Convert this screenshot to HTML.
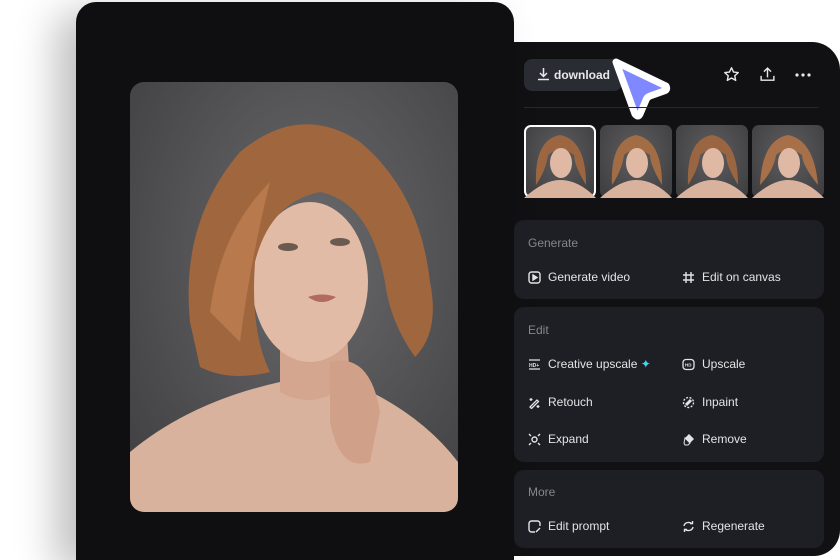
<!DOCTYPE html>
<html><head><meta charset="utf-8"><style>
*{margin:0;padding:0;box-sizing:border-box}
html,body{width:840px;height:560px;overflow:hidden}
body{background:#fff;position:relative;font-family:"Liberation Sans",sans-serif}
.left{position:absolute;left:76px;top:2px;width:438px;height:558px;background:#0f0f11;border-radius:20px 20px 0 0;box-shadow:-20px 10px 40px rgba(0,0,0,.25)}
.photo{position:absolute;left:130px;top:82px;width:328px;height:430px;border-radius:14px;overflow:hidden;background:radial-gradient(ellipse at 55% 40%,#6a6a6c,#4a4a4c 70%,#3e3e40)}
.right{position:absolute;left:514px;top:42px;width:326px;height:514px;background:#111114;border-radius:0 28px 26px 0}
.btn{position:absolute;left:524px;top:59px;width:98px;height:32px;background:#2a2c33;border-radius:8px;color:#e8e8ea;font-weight:bold;font-size:12px;line-height:32px;padding-left:30px}
.div{position:absolute;left:524px;top:107px;width:295px;height:1px;background:#26272c}
.th{position:absolute;top:125px;width:72px;height:73px;border-radius:7px;overflow:hidden;background:radial-gradient(ellipse at 50% 40%,#5e5e60,#3c3c3e)}
.card{position:absolute;left:514px;width:310px;background:#1e1f24;border-radius:10px}
.h{position:absolute;left:14px;font-size:12px;color:#85868c}
.it{position:absolute;font-size:12px;color:#e4e4e7;padding-left:20px;line-height:14px}
.it svg{position:absolute;left:0;top:1px}
</style></head><body>
<div class="right"></div>
<div class="left"></div>
<div class="photo">
<svg width="328" height="430" viewBox="0 0 328 430">
<path d="M0 370 Q60 320 150 300 L220 300 Q290 330 328 380 L328 430 L0 430Z" fill="#d9b29d"/>
<path d="M150 230 L150 310 Q185 330 220 300 L215 220Z" fill="#d4a68f"/>
<ellipse cx="180" cy="200" rx="58" ry="80" fill="#e2bba6"/>
<path d="M60 240 Q50 140 110 70 Q170 20 230 60 Q290 110 300 200 Q310 250 285 275 Q260 240 255 200 Q240 120 190 110 Q140 120 125 180 Q120 250 140 290 Q100 300 70 285Z" fill="#a0673f"/>
<path d="M80 230 Q90 150 140 100 Q120 180 110 260Z" fill="#b87a4c"/>
<path d="M200 280 Q240 270 250 330 L240 380 Q210 390 200 340Z" fill="#d0a088"/>
<ellipse cx="158" cy="165" rx="10" ry="4" fill="#6b5a50"/><ellipse cx="210" cy="160" rx="10" ry="4" fill="#6b5a50"/>
<path d="M178 215 Q192 210 206 215 Q192 225 178 215Z" fill="#b06a60"/>
</svg></div>
<div class="btn">download</div>
<svg style="position:absolute;left:537px;top:67px" width="13" height="14" viewBox="0 0 13 14" fill="none" stroke="#e8e8ea" stroke-width="1.5"><path d="M6.5 1v8M3 6l3.5 3.5L10 6M1 12.5h11"/></svg>
<svg style="position:absolute;left:723px;top:66px" width="17" height="17" viewBox="0 0 24 24" fill="none" stroke="#e8e8ea" stroke-width="2" stroke-linejoin="round"><path d="M12 2.5l2.9 6 6.6.8-4.9 4.5 1.3 6.5L12 17l-5.9 3.3 1.3-6.5L2.5 9.3l6.6-.8z"/></svg>
<svg style="position:absolute;left:759px;top:66px" width="17" height="17" viewBox="0 0 24 24" fill="none" stroke="#e8e8ea" stroke-width="2"><path d="M12 16V3M7 8l5-5 5 5M3 14v6h18v-6"/></svg>
<svg style="position:absolute;left:795px;top:73px" width="16" height="4"><circle cx="2" cy="2" r="1.6" fill="#e8e8ea"/><circle cx="8" cy="2" r="1.6" fill="#e8e8ea"/><circle cx="14" cy="2" r="1.6" fill="#e8e8ea"/></svg>
<svg style="position:absolute;left:600px;top:50px" width="80" height="76" viewBox="0 0 80 76"><path d="M16 12 L66 36 Q68 40 64 41 L50 46 Q47 47 46 50 L40 64 Q38 68 35 64 Z" fill="#8088ff" stroke="#fff" stroke-width="7" stroke-linejoin="round"/></svg>
<div class="div"></div>
<div class="th" style="left:524px;border:2px solid #fff"></div>
<div class="th" style="left:600px"></div><div class="th" style="left:676px"></div><div class="th" style="left:752px"></div>
<svg style="position:absolute;left:524px;top:125px" width="300" height="73">
<g><path d="M12 60 Q10 15 36 10 Q62 15 62 60 Q50 40 50 30 Q36 20 24 30 Q22 45 12 60Z" fill="#9c6740"/><ellipse cx="37" cy="38" rx="11" ry="15" fill="#e0b9a4"/><path d="M0 73 Q20 55 36 55 Q55 55 72 73Z" fill="#d9b29d"/></g>
<g transform="translate(76 0)"><path d="M12 60 Q10 15 36 10 Q62 15 62 60 Q50 40 50 30 Q36 20 24 30 Q22 45 12 60Z" fill="#a26c44"/><ellipse cx="37" cy="38" rx="11" ry="15" fill="#e0b9a4"/><path d="M0 73 Q20 55 36 55 Q55 55 72 73Z" fill="#d9b29d"/></g>
<g transform="translate(152 0)"><path d="M12 60 Q10 15 36 10 Q62 15 62 60 Q50 40 50 30 Q36 20 24 30 Q22 45 12 60Z" fill="#9a6642"/><ellipse cx="37" cy="38" rx="11" ry="15" fill="#e0b9a4"/><path d="M0 73 Q20 55 36 55 Q55 55 72 73Z" fill="#d9b29d"/></g>
<g transform="translate(228 0)"><path d="M8 60 Q10 15 36 10 Q62 15 66 60 Q50 40 50 30 Q36 20 24 30 Q22 45 8 60Z" fill="#a87048"/><ellipse cx="37" cy="38" rx="11" ry="15" fill="#e0b9a4"/><path d="M0 73 Q20 55 36 55 Q55 55 72 73Z" fill="#d9b29d"/></g>
</svg>
<div class="card" style="top:220px;height:79px"><div class="h" style="top:16px">Generate</div></div>
<div class="card" style="top:307px;height:155px"><div class="h" style="top:16px">Edit</div></div>
<div class="card" style="top:470px;height:78px"><div class="h" style="top:15px">More</div></div>
<div class="it" style="left:528px;top:270px"><svg width="13" height="13" fill="none" stroke="#e4e4e7" stroke-width="1.4"><rect x="1" y="1" width="11" height="11" rx="2.5"/><path d="M5 4v5l4-2.5z" fill="#e4e4e7"/></svg>Generate video</div>
<div class="it" style="left:682px;top:270px"><svg width="13" height="13" fill="none" stroke="#e4e4e7" stroke-width="1.4"><path d="M4 1v11M9 1v11M1 4h11M1 9h11"/></svg>Edit on canvas</div>
<div class="it" style="left:528px;top:357px"><svg width="13" height="13" fill="none" stroke="#e4e4e7" stroke-width="1.2"><path d="M1 2h11M1 11h11"/><text x="1" y="9" font-size="5" fill="#e4e4e7" stroke="none" font-weight="bold">HD+</text></svg>Creative upscale <span style="color:#3fd6f0">✦</span></div>
<div class="it" style="left:682px;top:357px"><svg width="13" height="13" fill="none" stroke="#e4e4e7" stroke-width="1.3"><rect x="1" y="1.5" width="11" height="10" rx="3"/><text x="3" y="8.5" font-size="4.5" fill="#e4e4e7" stroke="none" font-weight="bold">HD</text></svg>Upscale</div>
<div class="it" style="left:528px;top:395px"><svg width="13" height="13" fill="none" stroke="#e4e4e7" stroke-width="1.3"><path d="M2 11l7-7 1.5 1.5-7 7zM3 2v3M1.5 3.5h3M10 9v3M8.5 10.5h3"/></svg>Retouch</div>
<div class="it" style="left:682px;top:395px"><svg width="13" height="13" fill="none" stroke="#e4e4e7" stroke-width="1.4" stroke-dasharray="2 1.5"><circle cx="6.5" cy="6.5" r="5"/><path d="M4 9l5-5" stroke-dasharray="none" stroke-width="3"/></svg>Inpaint</div>
<div class="it" style="left:528px;top:432px"><svg width="13" height="13" fill="none" stroke="#e4e4e7" stroke-width="1.4"><circle cx="6.5" cy="6.5" r="2.5"/><path d="M1 1l2 2M12 1l-2 2M1 12l2-2M12 12l-2-2"/></svg>Expand</div>
<div class="it" style="left:682px;top:432px"><svg width="13" height="13" fill="#e4e4e7"><path d="M7 1l5 5-4 4-5-5z"/><path d="M3 5l5 5-2 2H3l-1-2z" fill="none" stroke="#e4e4e7"/></svg>Remove</div>
<div class="it" style="left:528px;top:519px"><svg width="13" height="13" fill="none" stroke="#e4e4e7" stroke-width="1.4"><path d="M12 6V3.5A2.5 2.5 0 0 0 9.5 1h-6A2.5 2.5 0 0 0 1 3.5v6A2.5 2.5 0 0 0 3.5 12H7"/><path d="M8 12l4-4"/></svg>Edit prompt</div>
<div class="it" style="left:682px;top:519px"><svg width="13" height="13" fill="none" stroke="#e4e4e7" stroke-width="1.4"><path d="M2 6a4.5 4 0 0 1 8-2M11 7a4.5 4 0 0 1-8 2M8 3.5h2.5V1M5 9.5H2.5V12"/></svg>Regenerate</div>
</body></html>
